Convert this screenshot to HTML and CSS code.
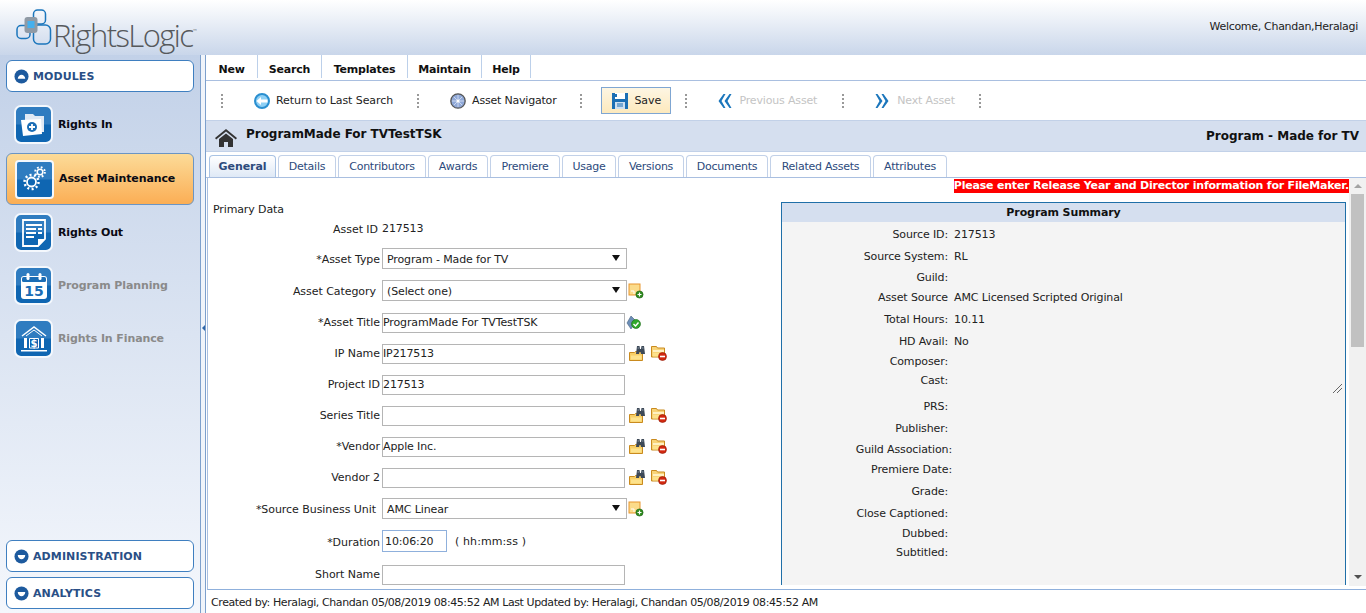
FILE: index.html
```html
<!DOCTYPE html>
<html lang="en">
<head>
<meta charset="utf-8">
<title>RightsLogic</title>
<link rel="stylesheet" href="styles.css">
</head>
<body>
<svg class="defs" width="0" height="0">
  <defs>
    <symbol id="folder-find" viewBox="0 0 18 16">
      <path d="M1.500 7.500h5l1-1h7v9h-13z" fill="#f8cf66" stroke="#c98a1e"/>
      <path d="M3 10.500h10.500v4H3z" fill="#fde28c"/>
      <path d="M8 9l1-8h2.500l.5 3h1l.5-3H16l1 8h-4l-.5-2h-1L11 9z" fill="#3d4957"/>
      <path d="M9.500 3h1.500M14 3h1.500" stroke="#8795a5"/>
    </symbol>
    <symbol id="folder-del" viewBox="0 0 18 16">
      <path d="M1.500 1.500h5l1 1.500h7v9h-13z" fill="#f8d478" stroke="#c98a1e"/>
      <path d="M3 5h11v2H3z" fill="#fff1c2"/>
      <path d="M3 8h11v3.500H3z" fill="#fde28c"/>
      <circle cx="12.500" cy="11.500" r="4" fill="#d3280f" stroke="#8f1a08" stroke-width=".6"/>
      <rect x="10" y="10.700" width="5" height="1.600" fill="#fff"/>
    </symbol>
    <symbol id="note-add" viewBox="0 0 16 16">
      <rect x="1" y="1" width="11" height="11" fill="#fbdb8a" stroke="#e8962f"/>
      <path d="M3 8h3v3" fill="none" stroke="#fff" stroke-width="1"/>
      <circle cx="11.500" cy="11.500" r="3.600" fill="#2e8b1e" stroke="#1c5f12" stroke-width=".6"/>
      <path d="M11.500 9.500v4M9.500 11.500h4" stroke="#fff" stroke-width="1.200"/>
    </symbol>
    <symbol id="grip" viewBox="0 0 3 16">
      <path d="M0 1h2v2H0zM0 5h2v2H0zM0 9h2v2H0zM0 13h2v2H0z" fill="#999"/>
    </symbol>
    <symbol id="disc-up" viewBox="0 0 16 16">
      <circle cx="8" cy="8" r="7.500" fill="#1d5a9e"/>
      <path d="M4 10.500c0-2.500 2-4.500 4-4.500s4 2 4 4.500z" fill="#fff"/>
    </symbol>
    <symbol id="disc-down" viewBox="0 0 16 16">
      <circle cx="8" cy="8" r="7.500" fill="#1d5a9e"/>
      <path d="M4 6.500h8c0 2.500-2 4.500-4 4.500s-4-2-4-4.500z" fill="#fff"/>
    </symbol>
  </defs>
</svg>

<div class="app">
  <header class="top">
    <div class="logo">
      <svg class="logo-mark" width="36" height="36" viewBox="0 0 36 36">
        <rect x="1" y="16.500" width="13" height="13" rx="4" fill="none" stroke="#1b76bc" stroke-width="1.500"/>
        <rect x="17.500" y="1" width="12" height="14" rx="4" fill="none" stroke="#1b76bc" stroke-width="1.500"/>
        <rect x="17.500" y="16" width="17" height="19" rx="5" fill="none" stroke="#1b76bc" stroke-width="1.500"/>
        <rect x="8.500" y="8" width="13" height="16" rx="3" fill="#8f9aa5"/>
        <rect x="11.500" y="12" width="7" height="7" fill="#45b0ee"/>
      </svg>
      <span class="logo-text">RightsLogic</span><span class="logo-tm">™</span>
    </div>
    <div class="welcome">Welcome, Chandan,Heralagi</div>
  </header>

  <aside class="side">
    <div class="pill"><svg class="disc"><use href="#disc-up"/></svg>MODULES</div>
    <nav class="mods">
      <div class="mod mod-first">
        <span class="tile">
          <svg width="30" height="30" viewBox="0 0 30 30">
            <path d="M6 4h8l2 2h9v6H6z" fill="#dfe9f4"/>
            <path d="M22 7h3v15h-3z" fill="#dfe9f4"/>
            <path d="M2 10l20-1 1 15-19 2z" fill="#fff"/>
            <circle cx="13" cy="17" r="5" fill="#1b6db5"/>
            <path d="M13 14v6M10 17h6" stroke="#fff" stroke-width="1.800"/>
          </svg>
        </span>
        <span class="mod-label">Rights In</span>
      </div>
      <div class="mod mod-active">
        <span class="tile">
          <svg width="30" height="30" viewBox="0 0 30 30">
            <circle cx="11.500" cy="18" r="4.500" fill="none" stroke="#fff" stroke-width="1.800"/>
            <circle cx="11.500" cy="18" r="7" fill="none" stroke="#fff" stroke-width="2.500" stroke-dasharray="2 2.400"/>
            <circle cx="20" cy="8" r="2.800" fill="none" stroke="#fff" stroke-width="1.500"/>
            <circle cx="20" cy="8" r="4.800" fill="none" stroke="#fff" stroke-width="2" stroke-dasharray="1.800 2"/>
          </svg>
        </span>
        <span class="mod-label">Asset Maintenance</span>
      </div>
      <div class="mod mod-out">
        <span class="tile">
          <svg width="28" height="30" viewBox="0 0 28 30">
            <path d="M3 2h22v19l-7 7H3z" fill="none" stroke="#fff" stroke-width="1.800"/>
            <path d="M6 7h16M6 11h10M18 11h4M6 15h10M18 15h4M6 19h8" stroke="#fff" stroke-width="1.800"/>
            <path d="M18 28v-7h7z" fill="#fff"/>
          </svg>
        </span>
        <span class="mod-label">Rights Out</span>
      </div>
      <div class="mod mod-off">
        <span class="tile">
          <svg width="30" height="30" viewBox="0 0 30 30">
            <rect x="2" y="5" width="26" height="23" rx="3" fill="#fff"/>
            <rect x="3" y="6" width="24" height="5" rx="1.500" fill="#1b6db5"/>
            <rect x="7.500" y="2" width="3" height="7" rx="1.500" fill="#fff"/>
            <rect x="19.500" y="2" width="3" height="7" rx="1.500" fill="#fff"/>
            <text x="15" y="25" class="cal-num">15</text>
          </svg>
        </span>
        <span class="mod-label">Program Planning</span>
      </div>
      <div class="mod mod-off">
        <span class="tile">
          <svg width="30" height="30" viewBox="0 0 30 30">
            <path d="M3 12L15 3l12 9" fill="none" stroke="#fff" stroke-width="1.500"/>
            <path d="M7 12l8-6 8 6" fill="none" stroke="#fff" stroke-width="1"/>
            <path d="M5 14h3v10H5zM22 14h3v10h-3zM2 26h26v1.500H2z" fill="#fff"/>
            <path d="M10.500 14.500h9v9.500h-9z" fill="none" stroke="#fff"/>
            <text x="15" y="23" class="bank-sign">$</text>
          </svg>
        </span>
        <span class="mod-label">Rights In Finance</span>
      </div>
    </nav>
    <div class="side-bottom">
      <div class="pill"><svg class="disc"><use href="#disc-down"/></svg>ADMINISTRATION</div>
      <div class="pill"><svg class="disc"><use href="#disc-down"/></svg>ANALYTICS</div>
    </div>
  </aside>

  <div class="split"><span class="split-arrow"></span></div>

  <main class="main">
    <nav class="menu">
      <span class="menu-item">New</span>
      <span class="menu-item">Search</span>
      <span class="menu-item">Templates</span>
      <span class="menu-item">Maintain</span>
      <span class="menu-item">Help</span>
    </nav>

    <div class="tools">
      <svg class="grip"><use href="#grip"/></svg>
      <span class="tool tool-return">
        <svg width="16" height="16" viewBox="0 0 16 16">
          <circle cx="8" cy="8" r="7" fill="#8fd0f5" stroke="#2a8fd0" stroke-width="2"/>
          <path d="M2.500 8l4.500-4v2.500h6.500v3H7V12z" fill="#fff"/>
        </svg>
        Return to Last Search
      </span>
      <svg class="grip"><use href="#grip"/></svg>
      <span class="tool tool-nav">
        <svg width="16" height="16" viewBox="0 0 16 16">
          <circle cx="8" cy="8" r="7.200" fill="#8fa8d8" stroke="#555" stroke-width="1.300"/>
          <path d="M8 2v12M2 8h12M4 4l8 8M12 4l-8 8" stroke="#e6edf8" stroke-width=".7"/>
          <circle cx="8" cy="8" r="1.500" fill="#fff"/>
        </svg>
        Asset Navigator
      </span>
      <svg class="grip"><use href="#grip"/></svg>
      <span class="tool tool-save">
        <svg width="16" height="16" viewBox="0 0 16 16">
          <path d="M0 0h16v16H0z" fill="#1c6fb4"/>
          <rect x="3" y="0" width="10" height="6" fill="#fff"/>
          <rect x="3" y="1" width="2" height="3" fill="#1c6fb4"/>
          <rect x="3" y="9" width="10" height="7" fill="#cfe0f0"/>
          <path d="M5 11h6M5 13h6" stroke="#1c6fb4"/>
        </svg>
        Save
      </span>
      <svg class="grip"><use href="#grip"/></svg>
      <span class="tool tool-off tool-prev">
        <svg width="15" height="16" viewBox="0 0 14 16">
          <path d="M6 1L1 8l5 7h2L4 8l4-7zM12 1L7 8l5 7h2l-4-7 4-7z" fill="#1b76bc"/>
        </svg>
        Previous Asset
      </span>
      <svg class="grip"><use href="#grip"/></svg>
      <span class="tool tool-off tool-next">
        <svg width="15" height="16" viewBox="0 0 14 16">
          <path d="M2 1l5 7-5 7H0l4-7-4-7zM8 1l5 7-5 7H6l4-7-4-7z" fill="#1b76bc"/>
        </svg>
        Next Asset
      </span>
      <svg class="grip"><use href="#grip"/></svg>
    </div>

    <div class="title-bar">
      <svg class="home" width="22" height="20" viewBox="0 0 22 20">
        <path d="M11 1L0 10l1.200 1.400L11 3.600l9.800 7.800L22 10z" fill="#333"/>
        <path d="M4 11l7-5.500 7 5.500v8h-5v-5H9v5H4z" fill="#333"/>
      </svg>
      <span class="title-name">ProgramMade For TVTestTSK</span>
      <span class="title-type">Program - Made for TV</span>
    </div>

    <div class="tabs">
      <span class="tab tab-on">General</span>
      <span class="tab">Details</span>
      <span class="tab">Contributors</span>
      <span class="tab">Awards</span>
      <span class="tab">Premiere</span>
      <span class="tab">Usage</span>
      <span class="tab">Versions</span>
      <span class="tab">Documents</span>
      <span class="tab">Related Assets</span>
      <span class="tab">Attributes</span>
    </div>

    <div class="pane">
      <div class="scroll-body">
        <div class="notice-row"><span class="notice">Please enter Release Year and Director information for FileMaker.</span></div>
        <div class="cols">
          <section class="primary">
            <div class="section-label">Primary Data</div>
            <div class="form">
              <label class="near low">Asset ID</label><div class="field low"><span>217513</span></div>
              <label class="low">*Asset Type</label><div class="field"><span class="select">Program - Made for TV</span></div>
              <label class="far low">Asset Category</label><div class="field"><span class="select">(Select one)</span><svg class="ico"><use href="#note-add"/></svg></div>
              <label>*Asset Title</label><div class="field"><span class="input">ProgramMade For TVTestTSK</span>
                <svg class="ico" viewBox="0 0 16 16"><path d="M5 1l5 5-5 8-4-6z" fill="#6d8fb8" stroke="#46607f" stroke-width=".6"/><circle cx="10" cy="9" r="4.500" fill="#2fa82a" stroke="#1b6a18" stroke-width=".6"/><path d="M7.500 9l2 2 3-3.500" fill="none" stroke="#fff" stroke-width="1.400"/></svg>
              </div>
              <label>IP Name</label><div class="field"><span class="input">IP217513</span><svg class="ico-f"><use href="#folder-find"/></svg><svg class="ico-f"><use href="#folder-del"/></svg></div>
              <label>Project ID</label><div class="field"><span class="input">217513</span></div>
              <label>Series Title</label><div class="field"><span class="input"></span><svg class="ico-f"><use href="#folder-find"/></svg><svg class="ico-f"><use href="#folder-del"/></svg></div>
              <label>*Vendor</label><div class="field"><span class="input">Apple Inc.</span><svg class="ico-f"><use href="#folder-find"/></svg><svg class="ico-f"><use href="#folder-del"/></svg></div>
              <label>Vendor 2</label><div class="field"><span class="input"></span><svg class="ico-f"><use href="#folder-find"/></svg><svg class="ico-f"><use href="#folder-del"/></svg></div>
              <label class="far low">*Source Business Unit</label><div class="field"><span class="select">AMC Linear</span><svg class="ico"><use href="#note-add"/></svg></div>
              <label class="lower">*Duration</label><div class="field"><span class="input input-time">10:06:20</span><span class="hint">( hh:mm:ss )</span></div>
              <label>Short Name</label><div class="field"><span class="input"></span></div>
            </div>
          </section>
          <section class="summary">
            <h2 class="sum-head">Program Summary</h2>
            <div class="sum-body">
              <label>Source ID:</label><span>217513</span>
              <label>Source System:</label><span>RL</span>
              <label>Guild:</label><span></span>
              <label>Asset Source</label><span>AMC Licensed Scripted Original</span>
              <label>Total Hours:</label><span>10.11</span>
              <label>HD Avail:</label><span>No</span>
              <label>Composer:</label><span></span>
              <label>Cast:</label><span class="cast"><svg class="resize" width="9" height="9" viewBox="0 0 9 9"><path d="M0 9L9 0M4 9l5-5" stroke="#666" stroke-width="1"/></svg></span>
              <label>PRS:</label><span></span>
              <label>Publisher:</label><span></span>
              <label class="wide">Guild Association:</label><span></span>
              <label class="wide">Premiere Date:</label><span></span>
              <label>Grade:</label><span></span>
              <label>Close Captioned:</label><span></span>
              <label>Dubbed:</label><span></span>
              <label>Subtitled:</label><span></span>
            </div>
          </section>
        </div>
      </div>
      <div class="scrollbar">
        <span class="sb-up"></span>
        <span class="sb-thumb"></span>
        <span class="sb-down"></span>
      </div>
    </div>

    <footer class="foot">Created by: Heralagi, Chandan 05/08/2019 08:45:52 AM Last Updated by: Heralagi, Chandan 05/08/2019 08:45:52 AM</footer>
  </main>
</div>
</body>
</html>
```
FILE: styles.css
```css
* { box-sizing: border-box; }
html, body { margin: 0; height: 100%; overflow: hidden; }
body { font: 11px/14px "DejaVu Sans", Verdana, sans-serif; color: #222; background: #fff; }
.defs { position: absolute; }

.app {
  display: grid;
  grid-template-columns: 200px 6px 1fr;
  grid-template-rows: 55px 558px;
  height: 613px;
}

/* header */
.top {
  grid-column: 1 / -1;
  display: flex;
  justify-content: space-between;
  align-items: flex-start;
  background: linear-gradient(#fff, #c9d6ea);
  padding: 9px 8px 0 16px;
}
.logo { display: flex; align-items: flex-start; }
.logo-mark { flex: none; }
.logo-text {
  font: 300 31px/36px "Open Sans", sans-serif;
  letter-spacing: -1.55px;
  color: #56595c;
  margin: 8px 0 0 1px;
}
.logo-tm { font-size: 5px; line-height: 8px; color: #56595c; margin-top: 18px; }
.welcome { margin-top: 11px; font-size: 11px; letter-spacing: -.3px; color: #222; }

/* sidebar */
.side {
  display: flex;
  flex-direction: column;
  padding: 5px 6px 4px;
  background: linear-gradient(#c2d1e8, #f4f7fc);
}
.pill {
  display: flex;
  align-items: center;
  gap: 4px;
  height: 32px;
  padding: 2px 0 0 7px;
  background: #fff;
  border: 1px solid #3f7fc0;
  border-radius: 6px;
  font-weight: 700;
  font-size: 11px;
  color: #2a4f86;
  letter-spacing: .1px;
}
.disc { width: 15px; height: 15px; flex: none; margin-top: -2px; }
.mods { display: flex; flex-direction: column; flex: 1; margin-top: 13px; }
.mod { display: flex; align-items: center; gap: 5px; font-weight: 700; }
.mod-label { letter-spacing: -.1px; color: #0a0a14; }
.tile {
  width: 39px; height: 39px;
  display: flex; align-items: center; justify-content: center;
  background: linear-gradient(#2f7cc0 48%, #0f66b2 52%);
  border: 2px solid #f4f8fd;
  border-radius: 7px;
  flex: none;
}
.mod-first, .mod-out, .mod-off { padding-left: 8px; }
.mod-active {
  height: 52px;
  margin-top: 9px;
  padding-left: 8px;
  background: linear-gradient(#fcdb98, #fbae55);
  border: 1px solid #6b95c4;
  border-radius: 6px;
}
.mod-active .tile { border-radius: 4px; }
.mod-out { margin-top: 8px; }
.mod-off { margin-top: 14px; }
.mod-off .mod-label { color: #8a8a8a; }
.cal-num { font: 700 14px "DejaVu Sans", sans-serif; fill: #1b6db5; text-anchor: middle; }
.bank-sign { font: 700 10px "DejaVu Sans", sans-serif; fill: #fff; text-anchor: middle; }
.side-bottom { display: flex; flex-direction: column; gap: 5px; }

/* splitter */
.split {
  display: flex;
  align-items: center;
  background: #f0f4fa;
  border-left: 1px solid #7da0cc;
  border-right: 1px solid #7da0cc;
  padding-bottom: 13px;
}
.split-arrow {
  width: 0; height: 0;
  border: 3px solid transparent;
  border-right-color: #2f66a8;
  border-left-width: 0;
  margin-left: 1px;
}

/* main */
.main { display: flex; flex-direction: column; min-width: 0; background: #fff; }
.menu {
  display: grid;
  grid-template-columns: 52px 64px 86px 74px 49px;
  justify-content: start;
  height: 26px;
  padding-bottom: 2px;
  border-bottom: 1px solid #a9bfe0;
  flex: none;
}
.menu-item {
  display: flex; align-items: center; justify-content: center;
  padding-top: 7px;
  font-weight: 700;
  letter-spacing: -.2px;
  color: #111;
  border-right: 1px solid #bcd0ea;
}

.tools {
  display: flex;
  align-items: center;
  height: 40px;
  flex: none;
  border-bottom: 1px solid #c2d1e8;
  padding-left: 15px;
  color: #222;
}
.grip { width: 3px; height: 16px; flex: none; }
.tool { display: inline-flex; align-items: center; gap: 6px; letter-spacing: -.08px; }
.tool-return { margin: 0 24px 0 30px; }
.tool-nav { margin: 0 24px 0 30px; letter-spacing: -.2px; }
.tool-save {
  height: 27px;
  width: 70px;
  margin: 0 14px 0 18px;
  padding-left: 10px;
  background: linear-gradient(#fdf6e3, #fde9bd);
  border: 1px solid #7fa6d2;
}
.tool-off { color: #c4c4c4; letter-spacing: -.16px; gap: 7px; }
.tool-prev { margin: 0 25px 0 29px; }
.tool-next { margin: 0 24px 0 30px; }

.title-bar {
  display: flex;
  align-items: center;
  height: 31px;
  flex: none;
  padding: 0 7px 0 9px;
  background: #d5dfef;
  border-bottom: 1px solid #c2d1e8;
  font-weight: 700;
  font-size: 12px;
  color: #111;
}
.home { flex: none; margin-top: 4px; }
.title-name { margin: -4px 0 0 9px; letter-spacing: -.03px; }
.title-type { margin-left: auto; letter-spacing: -.02px; }

.tabs {
  display: grid;
  grid-template-columns: 67px 58px 88px 60px 70px 54px 66px 82px 101px 74px;
  justify-content: start;
  gap: 2px;
  height: 26px;
  flex: none;
  padding: 3px 0 0 3px;
  border-bottom: 1px solid #a9bfe0;
}
.tab {
  display: flex; align-items: center; justify-content: center;
  border: 1px solid #c2d1e8;
  border-bottom: 0;
  border-radius: 4px 4px 0 0;
  color: #2c4a7c;
  letter-spacing: -.25px;
  white-space: nowrap;
}
.tab-on {
  font-weight: 700;
  letter-spacing: -.08px;
  background: linear-gradient(#fff, #dfe9f6);
  border-color: #a9c3e4;
}

.pane {
  display: flex;
  height: 412px;
  flex: none;
  margin-left: 1px;
  border-left: 1px solid #a9bfe0;
  border-bottom: 1px solid #8fb0dc;
  overflow: hidden;
}
.scroll-body { flex: 1; min-width: 0; }
.notice-row { display: flex; justify-content: flex-end; padding-top: 1px; height: 15px; }
.notice { background: #f00; color: #fff; font-weight: 700; line-height: 14px; letter-spacing: -.2px; white-space: nowrap; }
.cols { display: flex; padding-top: 9px; }

/* primary form */
.primary { width: 573px; flex: none; padding: 1px 0 0 5px; }
.section-label { height: 14px; line-height: 14px; letter-spacing: -.12px; }
.form {
  display: grid;
  grid-template-columns: 167px 1fr;
  grid-template-rows: 30px 32px 32px 31px 31px 31px 31px 31px 31px 32px 34px 32px;
  column-gap: 2px;
  margin-top: 1px;
  align-items: start;
}
.form label { text-align: right; line-height: 21px; letter-spacing: -.05px; }
.form label.far { padding-right: 4px; }
.form label.near { padding-right: 2px; }
.form label.low { padding-top: 1px; }
.form label.lower { padding-top: 2px; }
.field { display: flex; align-items: center; min-height: 21px; letter-spacing: -.12px; }
.field.low { padding-top: 1px; }
.input, .select {
  display: flex; align-items: center;
  height: 20px;
  width: 243px;
  padding: 0;
  border: 1px solid #b5b5b5;
  background: #fff;
  flex: none;
  letter-spacing: -.12px;
}
.select {
  height: 21px;
  width: 245px;
  padding: 2px 0 0 4px;
  position: relative;
}
.select::after {
  content: "";
  position: absolute;
  right: 6px; top: 6px;
  border: 4px solid transparent;
  border-top: 6px solid #111;
  border-bottom: 0;
}
.input-time { width: 65px; height: 22px; border-color: #8fb0dc; padding: 2px 0 0 2px; }
.hint { margin-left: 8px; letter-spacing: .1px; padding-top: 2px; }
.ico { width: 16px; height: 16px; margin-left: 1px; flex: none; }
.ico-f { width: 18px; height: 16px; margin: -2px 0 0 3px; flex: none; }
.ico-f + .ico-f { margin-left: 4px; }
.select + .ico { margin-left: 1px; }

/* summary */
.summary {
  width: 565px;
  flex: none;
  border: 1px solid #1f6fa8;
  border-bottom: 0;
  height: 383px;
  background: #f4f4f4;
}
.sum-head {
  margin: 0;
  height: 19px;
  background: #d5dfef;
  font-size: 11px;
  line-height: 20px;
  font-weight: 700;
  text-align: center;
  color: #111;
  letter-spacing: -.1px;
}
.sum-body {
  display: grid;
  grid-template-columns: 170px 1fr;
  grid-template-rows: 22px 21px 20px 22px 22px 20px 19px 26px 22px 21px 20px 22px 22px 20px 19px 14px;
  column-gap: 2px;
  padding-top: 6px;
  align-items: start;
}
.sum-body label { text-align: right; padding-right: 4px; letter-spacing: -.12px; }
.sum-body label.wide { padding-right: 0; }
.sum-body span { letter-spacing: -.12px; }
.cast { position: relative; align-self: stretch; }
.resize { position: absolute; right: 3px; top: 10px; }

/* scrollbar */
.scrollbar {
  width: 17px;
  flex: none;
  margin-bottom: 3px;
  background: #f1f1f1;
  display: flex;
  flex-direction: column;
  align-items: center;
}
.sb-up, .sb-down { width: 0; height: 0; border: 4px solid transparent; flex: none; }
.sb-up { border-bottom: 4px solid #a3a3a3; border-top: 0; margin-top: 6px; }
.sb-down { border-top: 4px solid #505050; border-bottom: 0; margin-top: auto; margin-bottom: 7px; }
.sb-thumb { width: 13px; height: 153px; background: #c1c1c1; margin-top: 6px; }

.foot {
  flex: 1;
  padding: 6px 0 0 5px;
  letter-spacing: -.41px;
  color: #222;
  white-space: nowrap;
}
```
